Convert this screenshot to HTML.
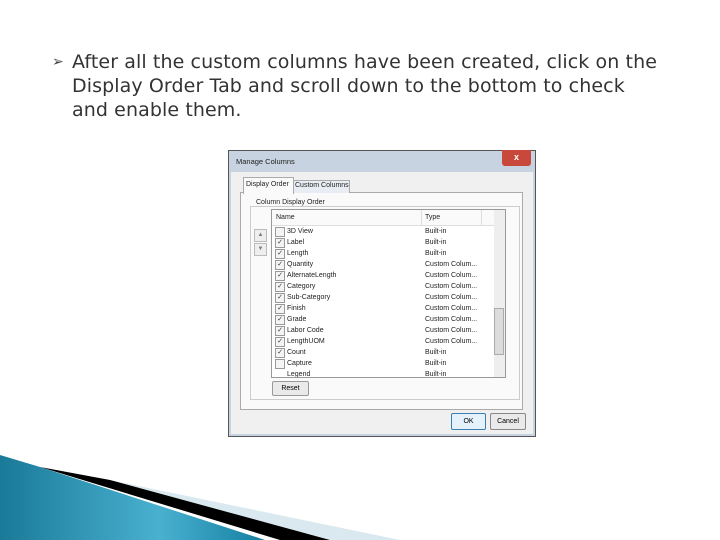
<!DOCTYPE html>
<html><head><style>
body{margin:0;width:720px;height:540px;background:#fff;position:relative;overflow:hidden;font-family:"Liberation Sans",sans-serif}
.t{position:absolute;left:72px;top:50px;font-family:"DejaVu Sans",sans-serif;font-size:19px;line-height:24px;color:#333;white-space:nowrap;letter-spacing:0.1px}
.b{position:absolute;left:52px;top:53px;font-size:14px;color:#444}
.a{position:absolute;font-size:7px;color:#222;white-space:nowrap}
.r{position:absolute;left:275px;width:8px;height:8px;border:1px solid #999;background:#f4f4f4;font-size:7px;line-height:8px;text-align:center;color:#334;margin-top:-1px}
</style></head><body>
<div class="b">➢</div>
<div class="t">After all the custom columns have been created, click on the<br>Display Order Tab and scroll down to the bottom to check<br>and enable them.</div>
<div style="position:absolute;left:228px;top:150px;width:308px;height:287px;background:#c7d3e0;border:1px solid #555;box-sizing:border-box"></div>
<div style="position:absolute;left:231px;top:172px;width:302px;height:262px;background:#f0f0f0"></div>
<div class="a" style="left:236px;top:157px;font-size:7.5px">Manage Columns</div>
<div style="position:absolute;left:502px;top:150px;width:29px;height:16px;background:#c8493b;border-radius:0 0 3px 3px;color:#fff;font-size:9px;text-align:center;line-height:15px;font-weight:bold">x</div>
<div style="position:absolute;left:240px;top:192px;width:283px;height:218px;border:1px solid #aaa;background:#fafafa;box-sizing:border-box"></div>
<div style="position:absolute;left:243px;top:177px;width:49px;height:16px;border:1px solid #aaa;border-bottom:none;background:#fafafa"></div>
<div class="a" style="left:246px;top:181px">Display Order</div>
<div style="position:absolute;left:293px;top:180px;width:55px;height:12px;border:1px solid #aaa;border-bottom:none;background:#e8edf3"></div>
<div class="a" style="left:295px;top:182px">Custom Columns</div>
<div style="position:absolute;left:250px;top:206px;width:268px;height:192px;border:1px solid #ccc"></div>
<div class="a" style="left:254px;top:199px;background:#fafafa;padding:0 2px">Column Display Order</div>
<div style="position:absolute;left:271px;top:209px;width:235px;height:169px;border:1px solid #999;background:#fff;box-sizing:border-box"></div>
<div style="position:absolute;left:272px;top:210px;width:222px;height:15px;border-bottom:1px solid #ddd;background:#fafafa"></div>
<div class="a" style="left:276px;top:214px">Name</div>
<div class="a" style="left:425px;top:214px">Type</div>
<div style="position:absolute;left:421px;top:210px;width:1px;height:15px;background:#ddd"></div>
<div style="position:absolute;left:481px;top:210px;width:1px;height:15px;background:#ddd"></div>
<div style="position:absolute;left:494px;top:210px;width:11px;height:167px;background:#eee"></div>
<div style="position:absolute;left:494px;top:308px;width:10px;height:47px;background:#dcdcdc;border:1px solid #aaa;box-sizing:border-box"></div>
<div style="position:absolute;left:254px;top:229px;width:11px;height:11px;border:1px solid #bbb;background:#eee;font-size:6px;text-align:center;line-height:11px;color:#777">▲</div>
<div style="position:absolute;left:254px;top:243px;width:11px;height:11px;border:1px solid #bbb;background:#eee;font-size:6px;text-align:center;line-height:11px;color:#777">▼</div>
<div class="r" style="top:228px"></div><div class="a" style="left:287px;top:228px">3D View</div><div class="a" style="left:425px;top:228px">Built-in</div>
<div class="r" style="top:239px">✓</div><div class="a" style="left:287px;top:239px">Label</div><div class="a" style="left:425px;top:239px">Built-in</div>
<div class="r" style="top:250px">✓</div><div class="a" style="left:287px;top:250px">Length</div><div class="a" style="left:425px;top:250px">Built-in</div>
<div class="r" style="top:261px">✓</div><div class="a" style="left:287px;top:261px">Quantity</div><div class="a" style="left:425px;top:261px">Custom Colum...</div>
<div class="r" style="top:272px">✓</div><div class="a" style="left:287px;top:272px">AlternateLength</div><div class="a" style="left:425px;top:272px">Custom Colum...</div>
<div class="r" style="top:283px">✓</div><div class="a" style="left:287px;top:283px">Category</div><div class="a" style="left:425px;top:283px">Custom Colum...</div>
<div class="r" style="top:294px">✓</div><div class="a" style="left:287px;top:294px">Sub-Category</div><div class="a" style="left:425px;top:294px">Custom Colum...</div>
<div class="r" style="top:305px">✓</div><div class="a" style="left:287px;top:305px">Finish</div><div class="a" style="left:425px;top:305px">Custom Colum...</div>
<div class="r" style="top:316px">✓</div><div class="a" style="left:287px;top:316px">Grade</div><div class="a" style="left:425px;top:316px">Custom Colum...</div>
<div class="r" style="top:327px">✓</div><div class="a" style="left:287px;top:327px">Labor Code</div><div class="a" style="left:425px;top:327px">Custom Colum...</div>
<div class="r" style="top:338px">✓</div><div class="a" style="left:287px;top:338px">LengthUOM</div><div class="a" style="left:425px;top:338px">Custom Colum...</div>
<div class="r" style="top:349px">✓</div><div class="a" style="left:287px;top:349px">Count</div><div class="a" style="left:425px;top:349px">Built-in</div>
<div class="r" style="top:360px"></div><div class="a" style="left:287px;top:360px">Capture</div><div class="a" style="left:425px;top:360px">Built-in</div>
<div style="position:absolute;left:272px;top:370px;width:222px;height:7px;overflow:hidden"><div class="a" style="left:15px;top:1px">Legend</div><div class="a" style="left:153px;top:1px">Built-in</div></div>
<div style="position:absolute;left:272px;top:381px;width:35px;height:13px;border:1px solid #999;background:#eaeaea;border-radius:2px;font-size:7px;text-align:center;line-height:13px">Reset</div>
<div style="position:absolute;left:451px;top:413px;width:33px;height:15px;border:1px solid #3c7fb1;background:#e5f1fb;border-radius:2px;font-size:7px;text-align:center;line-height:15px">OK</div>
<div style="position:absolute;left:490px;top:413px;width:34px;height:15px;border:1px solid #888;background:#eaeaea;border-radius:2px;font-size:7px;text-align:center;line-height:15px">Cancel</div>
<svg style="position:absolute;left:0;top:440px" width="720" height="100">
<polygon points="100,38 400,100 330,100" fill="#d9e9ef"/>
<polygon points="40,27 110,40 330,100 280,100" fill="#000"/>
<defs><linearGradient id="g" x1="0" x2="1"><stop offset="0" stop-color="#1a7a98"/><stop offset="0.6" stop-color="#49b0d0"/><stop offset="1" stop-color="#1580a0"/></linearGradient></defs>
<polygon points="0,15 40,27 265,100 0,100" fill="url(#g)"/>
</svg>
</body></html>
